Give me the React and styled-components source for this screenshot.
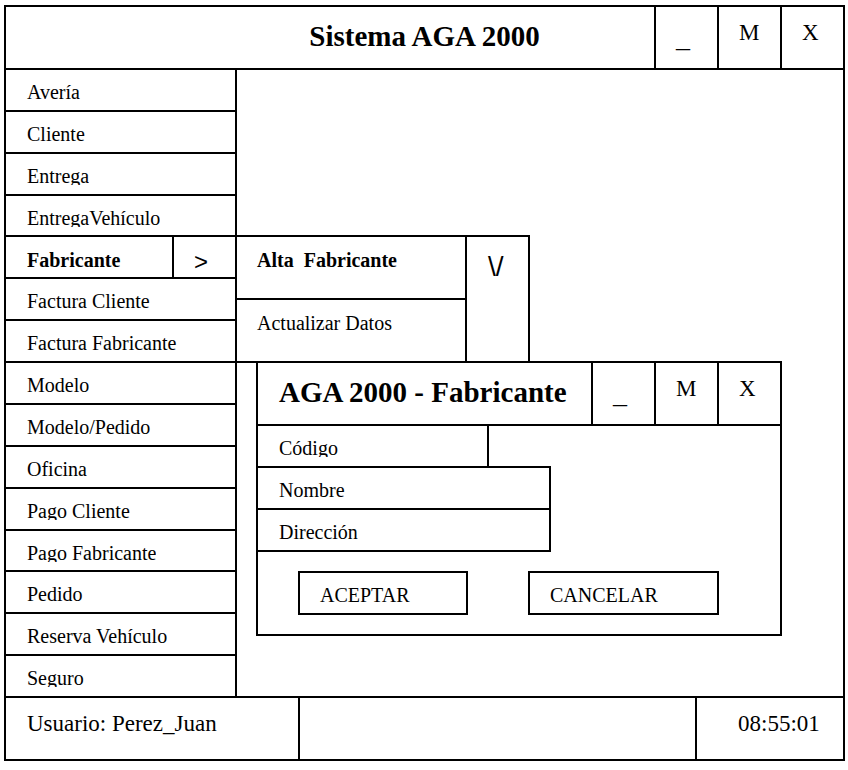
import React from "react";
import styled, { createGlobalStyle, css } from "styled-components";

const LINE = "2px solid #000";

const GlobalStyle = createGlobalStyle`
  *, *::before, *::after { box-sizing: border-box; }
  body {
    margin: 0;
    background: #fff;
    color: #000;
    font-family: "Liberation Serif", "Times New Roman", serif;
    font-size: 20px;
  }
  button, input {
    font: inherit;
    color: inherit;
    background: none;
    border: 0;
    border-radius: 0;
    padding: 0;
    margin: 0;
  }
  button { cursor: pointer; text-align: left; }
`;

const Page = styled.div`
  display: flex;
  min-height: 100vh;
  padding: 5px 3px 9px 4px;
`;

const AppWindow = styled.div`
  flex: 1;
  display: flex;
  flex-direction: column;
  border: ${LINE};
`;

const TitleBar = styled.header`
  display: grid;
  grid-template-columns: ${(p) => (p.$centered ? "1fr auto 1fr" : "auto 1fr")};
  height: 63px;
  border-bottom: ${LINE};
`;

const Title = styled.h1`
  margin: 0;
  padding: ${(p) => (p.$inset ? "12px 0 0 21px" : "12px 0 0")};
  grid-column: ${(p) => (p.$inset ? 1 : 2)};
  font-size: 29px;
  line-height: 34px;
  font-weight: bold;
  white-space: nowrap;
`;

const WindowControls = styled.div`
  display: flex;
  justify-content: flex-end;
`;

const ControlButton = styled.button`
  display: flex;
  width: 63px;
  padding: ${(p) => (p.$large ? 14 : 12)}px 0 0 20px;
  border-left: ${LINE};
  font-size: ${(p) => (p.$large ? 28 : 23)}px;
  line-height: ${(p) => (p.$large ? 34 : 27)}px;
`;

const Body = styled.div`
  flex: 1;
  display: flex;
`;

const Sidebar = styled.nav`
  width: 231px;
  flex: none;
  display: flex;
  border-right: ${LINE};
`;

const MenuList = styled.ul`
  flex: 1;
  display: grid;
  grid-template-rows: repeat(15, minmax(40px, 1fr));
  margin: 0;
  padding: 0;
  list-style: none;
`;

const MenuRow = styled.li`
  position: relative;
  display: flex;
  border-bottom: ${LINE};
`;

const MenuButton = styled.button`
  flex: 1;
  display: flex;
  align-items: flex-start;
  padding: 11px 0 0 21px;
  ${(p) => p.$active && css`
    padding-top: 12px;
    font-weight: bold;
  `}
`;

const Label = styled.span`
  line-height: 22px;
  white-space: pre;
  ${(p) => p.$trimmed && css`
    height: 20px;
    overflow: hidden;
  `}
`;

const ArrowButton = styled.button`
  display: flex;
  width: 63px;
  padding: 11px 0 0 20px;
  border-left: ${LINE};
  font-family: "Liberation Sans", Arial, sans-serif;
  font-size: 24px;
  line-height: 27px;
`;

const Submenu = styled.div`
  position: absolute;
  top: -2px;
  left: 100%;
  z-index: 1;
  display: flex;
  width: 295px;
  border: ${LINE};
  border-left: 0;
`;

const SubmenuItems = styled.div`
  flex: 1;
  display: grid;
  grid-template-rows: 63px 61px;
`;

const SubmenuItem = styled.button`
  display: flex;
  align-items: flex-start;
  padding: 12px 0 0 22px;
  ${(p) => p.$active && css`
    font-weight: bold;
    border-bottom: ${LINE};
  `}
`;

const ScrollButton = styled.button`
  display: flex;
  width: 63px;
  padding: 14px 0 0 21px;
  border-left: ${LINE};
  font-family: "Liberation Sans", Arial, sans-serif;
  font-size: 28px;
  line-height: 32px;
`;

const Workspace = styled.main`
  flex: 1;
  position: relative;
`;

const Dialog = styled.section`
  position: absolute;
  top: 291px;
  left: 19px;
  width: 526px;
  border: ${LINE};
`;

const Form = styled.form`
  display: flex;
  flex-direction: column;
  align-items: flex-start;
`;

const Field = styled.label`
  display: flex;
  align-items: flex-start;
  gap: 8px;
  width: ${(p) => (p.$short ? 233 : 295)}px;
  height: 44px;
  margin: -2px 0 0 -2px;
  padding: 11px 8px 0 21px;
  border: ${LINE};
`;

const FieldInput = styled.input`
  flex: 1;
  min-width: 0;
  height: 22px;
  outline: none;
`;

const Actions = styled.div`
  display: flex;
  gap: 60px;
  padding: 19px 40px 19px;
`;

const ActionButton = styled.button`
  display: flex;
  width: ${(p) => (p.$wide ? 191 : 170)}px;
  height: 44px;
  padding: 11px 0 0 20px;
  border: ${LINE};
  line-height: 22px;
`;

const StatusBar = styled.footer`
  display: flex;
  height: 63px;
  margin-top: -2px;
  border-top: ${LINE};
  font-size: 23px;
  line-height: 27px;
`;

const StatusUser = styled.div`
  width: 294px;
  padding: 12px 0 0 21px;
  border-right: ${LINE};
`;

const StatusTime = styled.time`
  width: 148px;
  margin-left: auto;
  padding: 12px 0 0 41px;
  border-left: ${LINE};
`;

const MENU = [
  "Avería",
  "Cliente",
  "Entrega",
  "EntregaVehículo",
  "Fabricante",
  "Factura Cliente",
  "Factura Fabricante",
  "Modelo",
  "Modelo/Pedido",
  "Oficina",
  "Pago Cliente",
  "Pago Fabricante",
  "Pedido",
  "Reserva Vehículo",
  "Seguro",
];

const FIELDS = [
  { label: "Código", name: "codigo", short: true },
  { label: "Nombre", name: "nombre" },
  { label: "Dirección", name: "direccion" },
];

const hasDescender = (text) => text.includes("g");

function Controls() {
  return (
    <WindowControls>
      <ControlButton type="button" aria-label="Minimizar" $large>_</ControlButton>
      <ControlButton type="button" aria-label="Maximizar">M</ControlButton>
      <ControlButton type="button" aria-label="Cerrar">X</ControlButton>
    </WindowControls>
  );
}

function FabricanteMenu() {
  return (
    <>
      <ArrowButton type="button" aria-label="Abrir submenú">&gt;</ArrowButton>
      <Submenu>
        <SubmenuItems>
          <SubmenuItem type="button" $active>
            <Label>{"Alta  Fabricante"}</Label>
          </SubmenuItem>
          <SubmenuItem type="button">
            <Label>Actualizar Datos</Label>
          </SubmenuItem>
        </SubmenuItems>
        <ScrollButton type="button" aria-label="Bajar">{"\\/"}</ScrollButton>
      </Submenu>
    </>
  );
}

export default function App() {
  return (
    <>
      <GlobalStyle />
      <Page>
        <AppWindow>
          <TitleBar $centered>
            <Title>Sistema AGA 2000</Title>
            <Controls />
          </TitleBar>
          <Body>
            <Sidebar>
              <MenuList>
                {MENU.map((name) => (
                  <MenuRow key={name}>
                    <MenuButton type="button" $active={name === "Fabricante"}>
                      <Label $trimmed={hasDescender(name)}>{name}</Label>
                    </MenuButton>
                    {name === "Fabricante" && <FabricanteMenu />}
                  </MenuRow>
                ))}
              </MenuList>
            </Sidebar>
            <Workspace>
              <Dialog role="dialog" aria-labelledby="dialog-title">
                <TitleBar>
                  <Title as="h2" id="dialog-title" $inset>AGA 2000 - Fabricante</Title>
                  <Controls />
                </TitleBar>
                <Form onSubmit={(e) => e.preventDefault()}>
                  {FIELDS.map((f) => (
                    <Field key={f.name} $short={f.short}>
                      <Label $trimmed={hasDescender(f.label)}>{f.label}</Label>
                      <FieldInput type="text" name={f.name} />
                    </Field>
                  ))}
                  <Actions>
                    <ActionButton type="submit">ACEPTAR</ActionButton>
                    <ActionButton type="button" $wide>CANCELAR</ActionButton>
                  </Actions>
                </Form>
              </Dialog>
            </Workspace>
          </Body>
          <StatusBar>
            <StatusUser>Usuario: Perez_Juan</StatusUser>
            <StatusTime>08:55:01</StatusTime>
          </StatusBar>
        </AppWindow>
      </Page>
    </>
  );
}
